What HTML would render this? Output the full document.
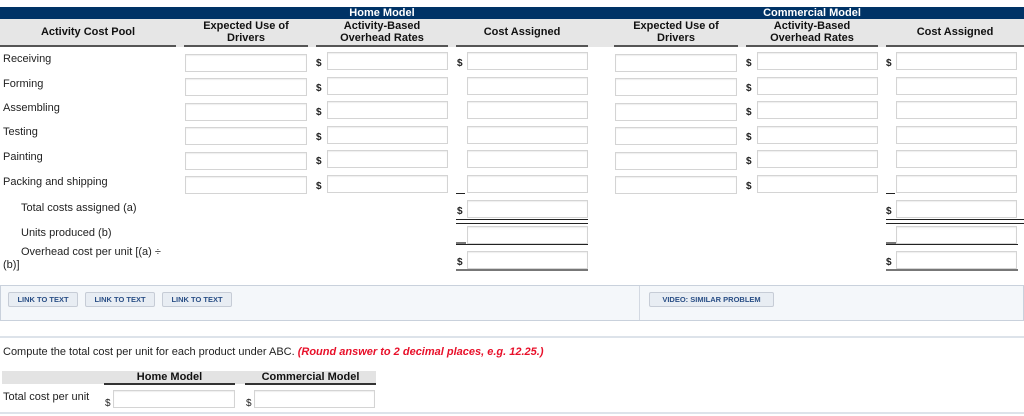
<!DOCTYPE html>
<html><head><meta charset="utf-8"><style>
body{margin:0;width:1024px;height:416px;position:relative;background:#fff;font-family:"Liberation Sans",Arial,sans-serif;font-size:11px;color:#222;overflow:hidden}
div,span{position:absolute}
.nav{background:#003366;color:#fff;font-weight:bold;text-align:center;height:12px;line-height:12px;top:7px}
.hd{top:19px;height:26px;background:#e6e6e6;border-bottom:2px solid #555;font-weight:bold;text-align:center;line-height:12px;display:flex;align-items:center;justify-content:center;font-size:11px;color:#111}
.in{border:1px solid #d4d4d4;background:#fff;height:16px;box-shadow:inset 0 1px 1px #eee}
.lb{left:3px}
.d{font-size:10px;font-weight:bold;color:#222}
.btn{top:292px;height:13px;border:1px solid #c6ccd6;border-radius:2px;background:#e8edf3;color:#2a4f86;font-size:7.5px;font-weight:bold;line-height:13px;text-align:center}
</style></head><body>
<div class="nav" style="left:0;width:1024px"></div>
<div class="nav" style="left:316px;width:132px">Home Model</div>
<div class="nav" style="left:746px;width:132px">Commercial Model</div>
<div class="hd" style="left:0;width:176px;background:#e6e6e6">Activity Cost Pool</div>
<div class="hd" style="left:176px;width:8px;border-bottom-color:#e6e6e6"></div>
<div class="hd" style="left:184px;width:124px">Expected Use of<br>Drivers</div>
<div class="hd" style="left:308px;width:8px;border-bottom-color:#e6e6e6"></div>
<div class="hd" style="left:316px;width:132px">Activity-Based<br>Overhead Rates</div>
<div class="hd" style="left:448px;width:8px;border-bottom-color:#e6e6e6"></div>
<div class="hd" style="left:456px;width:132px">Cost Assigned</div>
<div class="hd" style="left:588px;width:26px;border-bottom-color:#e6e6e6"></div>
<div class="hd" style="left:614px;width:124px">Expected Use of<br>Drivers</div>
<div class="hd" style="left:738px;width:8px;border-bottom-color:#e6e6e6"></div>
<div class="hd" style="left:746px;width:132px">Activity-Based<br>Overhead Rates</div>
<div class="hd" style="left:878px;width:8px;border-bottom-color:#e6e6e6"></div>
<div class="hd" style="left:886px;width:138px">Cost Assigned</div>

<span class="lb" style="top:53px">Receiving</span>
<span class="lb" style="top:78px">Forming</span>
<span class="lb" style="top:102px">Assembling</span>
<span class="lb" style="top:126px">Testing</span>
<span class="lb" style="top:151px">Painting</span>
<span class="lb" style="top:176px">Packing and shipping</span>

<!-- rows -->
<div class="in" style="left:185px;top:54px;width:120px"></div>
<div class="in" style="left:185px;top:78px;width:120px"></div>
<div class="in" style="left:185px;top:103px;width:120px"></div>
<div class="in" style="left:185px;top:127px;width:120px"></div>
<div class="in" style="left:185px;top:152px;width:120px"></div>
<div class="in" style="left:185px;top:176px;width:120px"></div>

<div class="in" style="left:327px;top:52px;width:119px"></div>
<div class="in" style="left:327px;top:77px;width:119px"></div>
<div class="in" style="left:327px;top:101px;width:119px"></div>
<div class="in" style="left:327px;top:126px;width:119px"></div>
<div class="in" style="left:327px;top:150px;width:119px"></div>
<div class="in" style="left:327px;top:175px;width:119px"></div>
<span class="d" style="left:316px;top:58px">$</span>
<span class="d" style="left:316px;top:83px">$</span>
<span class="d" style="left:316px;top:107px">$</span>
<span class="d" style="left:316px;top:132px">$</span>
<span class="d" style="left:316px;top:156px">$</span>
<span class="d" style="left:316px;top:181px">$</span>

<div class="in" style="left:467px;top:52px;width:119px"></div>
<div class="in" style="left:467px;top:77px;width:119px"></div>
<div class="in" style="left:467px;top:101px;width:119px"></div>
<div class="in" style="left:467px;top:126px;width:119px"></div>
<div class="in" style="left:467px;top:150px;width:119px"></div>
<div class="in" style="left:467px;top:175px;width:119px"></div>
<span class="d" style="left:457px;top:58px">$</span>
<div style="left:456px;top:193px;width:9px;height:1px;background:#222"></div>

<div class="in" style="left:615px;top:54px;width:120px"></div>
<div class="in" style="left:615px;top:78px;width:120px"></div>
<div class="in" style="left:615px;top:103px;width:120px"></div>
<div class="in" style="left:615px;top:127px;width:120px"></div>
<div class="in" style="left:615px;top:152px;width:120px"></div>
<div class="in" style="left:615px;top:176px;width:120px"></div>

<div class="in" style="left:757px;top:52px;width:119px"></div>
<div class="in" style="left:757px;top:77px;width:119px"></div>
<div class="in" style="left:757px;top:101px;width:119px"></div>
<div class="in" style="left:757px;top:126px;width:119px"></div>
<div class="in" style="left:757px;top:150px;width:119px"></div>
<div class="in" style="left:757px;top:175px;width:119px"></div>
<span class="d" style="left:746px;top:58px">$</span>
<span class="d" style="left:746px;top:83px">$</span>
<span class="d" style="left:746px;top:107px">$</span>
<span class="d" style="left:746px;top:132px">$</span>
<span class="d" style="left:746px;top:156px">$</span>
<span class="d" style="left:746px;top:181px">$</span>

<div class="in" style="left:896px;top:52px;width:119px"></div>
<div class="in" style="left:896px;top:77px;width:119px"></div>
<div class="in" style="left:896px;top:101px;width:119px"></div>
<div class="in" style="left:896px;top:126px;width:119px"></div>
<div class="in" style="left:896px;top:150px;width:119px"></div>
<div class="in" style="left:896px;top:175px;width:119px"></div>
<span class="d" style="left:886px;top:58px">$</span>
<div style="left:886px;top:193px;width:9px;height:1px;background:#222"></div>

<!-- totals -->
<span style="left:21px;top:202px">Total costs assigned (a)</span>
<span style="left:21px;top:227px">Units produced (b)</span>
<span style="left:21px;top:246px;line-height:13px">Overhead cost per unit [(a) ÷</span>
<span style="left:3px;top:259px">(b)]</span>

<div class="in" style="left:467px;top:200px;width:119px"></div>
<span class="d" style="left:457px;top:206px">$</span>
<div style="left:456px;top:219px;width:132px;height:3px;border-top:1px solid #222;border-bottom:1px solid #222"></div>
<div class="in" style="left:467px;top:226px;width:119px"></div>
<div style="left:456px;top:244px;width:132px;height:1px;background:#222"></div>
<div style="left:456px;top:242px;width:10px;height:2px;background:#777"></div>
<div class="in" style="left:467px;top:251px;width:119px"></div>
<span class="d" style="left:457px;top:257px">$</span>
<div style="left:456px;top:269px;width:132px;height:2px;background:#777"></div>

<div class="in" style="left:896px;top:200px;width:119px"></div>
<span class="d" style="left:886px;top:206px">$</span>
<div style="left:886px;top:219px;width:138px;height:3px;border-top:1px solid #222;border-bottom:1px solid #222"></div>
<div class="in" style="left:896px;top:226px;width:119px"></div>
<div style="left:886px;top:244px;width:132px;height:1px;background:#222"></div>
<div style="left:886px;top:242px;width:10px;height:2px;background:#777"></div>
<div class="in" style="left:896px;top:251px;width:119px"></div>
<span class="d" style="left:886px;top:257px">$</span>
<div style="left:886px;top:269px;width:132px;height:2px;background:#777"></div>

<!-- links panel -->
<div style="left:0;top:285px;width:1022px;height:34px;background:#f4f7fa;border:1px solid #c9d1dc"></div>
<div style="left:639px;top:286px;width:1px;height:34px;background:#d3d9e2"></div>
<div class="btn" style="left:8px;width:68px">LINK TO TEXT</div>
<div class="btn" style="left:85px;width:68px">LINK TO TEXT</div>
<div class="btn" style="left:162px;width:68px">LINK TO TEXT</div>
<div class="btn" style="left:649px;width:123px">VIDEO: SIMILAR PROBLEM</div>

<div style="left:0;top:336px;width:1024px;height:2px;background:#dde3ea"></div>
<span style="left:3px;top:346px">Compute the total cost per unit for each product under ABC. <b style="color:#e8102a;font-style:italic">(Round answer to 2 decimal places, e.g. 12.25.)</b></span>

<div style="left:2px;top:371px;width:374px;height:13px;background:#e3e3e3"></div>
<div style="left:104px;top:371px;width:131px;height:12px;border-bottom:2px solid #333;font-weight:bold;text-align:center;line-height:12px;color:#111">Home Model</div>
<div style="left:245px;top:371px;width:131px;height:12px;border-bottom:2px solid #333;font-weight:bold;text-align:center;line-height:12px;color:#111">Commercial Model</div>
<span style="left:3px;top:391px">Total cost per unit</span>
<span class="d" style="left:105px;top:398px;font-weight:normal">$</span>
<div class="in" style="left:113px;top:390px;width:120px"></div>
<span class="d" style="left:246px;top:398px;font-weight:normal">$</span>
<div class="in" style="left:254px;top:390px;width:119px"></div>
<div style="left:0;top:412px;width:1024px;height:2px;background:#dde3ea"></div>
</body></html>
